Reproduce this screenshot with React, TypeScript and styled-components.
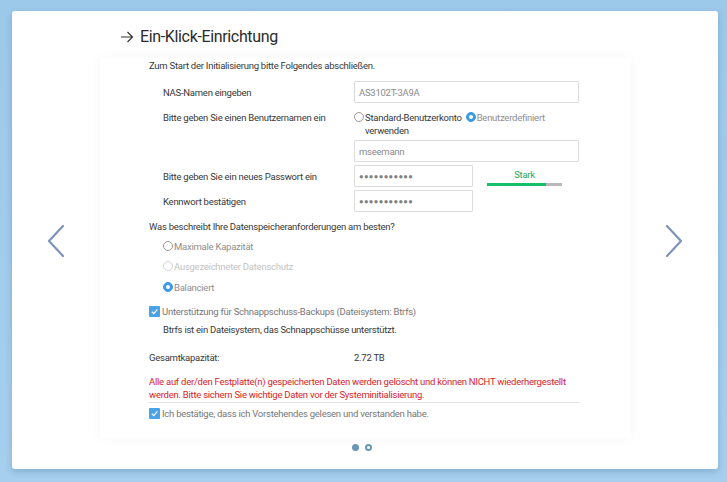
import * as React from 'react'
import styled, { createGlobalStyle } from 'styled-components'

const GlobalStyle = createGlobalStyle`
  html, body {
    margin: 0;
    padding: 0;
  }
  body {
    background: linear-gradient(180deg, #9cc8ea 0%, #a6cfee 100%);
    font-family: Roboto, "Noto Sans", Arial, sans-serif;
    color: #333;
  }
`

const Page = styled.div`
  width: 727px;
  height: 482px;
  box-sizing: border-box;
  padding: 11px 9px 13px 12px;
`

const Card = styled.div`
  height: 100%;
  background: #fff;
  border-radius: 3px;
  box-shadow: 0 3px 6px rgba(40, 80, 120, 0.25);
  display: grid;
  grid-template-columns: 88px 530px 1fr;
`

const NavSide = styled.div`
  display: flex;
  align-items: center;
  justify-content: center;
  padding-top: 2px;
  color: #7d93ba;
`

const Middle = styled.div`
  display: flex;
  flex-direction: column;
`

const Title = styled.h1`
  margin: 0;
  height: 47px;
  box-sizing: border-box;
  padding: 16px 0 0 20px;
  display: flex;
  align-items: flex-start;
  gap: 6px;
  font-size: 16px;
  font-weight: 400;
  line-height: 20px;
  align-self: flex-start;
  color: #2b2b2b;
`

const TitleArrow = styled.svg`
  margin-top: 4px;
`

const TitleText = styled.span`
  letter-spacing: -0.35px;
`

const Panel = styled.div`
  height: 380px;
  box-sizing: border-box;
  padding: 1px 51px 0 49px;
  font-size: 9.5px;
  letter-spacing: -0.25px;
  color: #383838;
  box-shadow: 0 0 10px rgba(60, 70, 140, 0.045);
  display: flex;
  flex-direction: column;
`

const Line = styled.div<{ $indent?: boolean; $color?: string; $mt?: number }>`
  line-height: 14px;
  padding-left: ${(p) => (p.$indent ? '14px' : '0')};
  margin-top: ${(p) => p.$mt ?? 0}px;
  color: ${(p) => p.$color ?? '#383838'};
`

const FormRow = styled.div<{ $mt?: number; $top?: boolean }>`
  display: grid;
  grid-template-columns: 191px 1fr;
  align-items: ${(p) => (p.$top ? 'start' : 'center')};
  padding-left: 14px;
  margin-top: ${(p) => p.$mt ?? 0}px;
`

const Label = styled.div`
  line-height: 13px;
`

const Input = styled.div<{ $short?: boolean }>`
  box-sizing: border-box;
  width: ${(p) => (p.$short ? '119px' : '225px')};
  height: 22px;
  border: 1px solid #dcdcdc;
  border-radius: 1px;
  padding-left: 4px;
  display: flex;
  align-items: center;
  color: #8a8a8a;
`

const Dots = styled.span`
  color: #808080;
  font-size: 7.5px;
  letter-spacing: 0.4px;
`

const Inline = styled.div`
  display: flex;
  align-items: center;
`

const Strength = styled.div`
  margin-left: 14px;
  width: 75px;
  display: flex;
  flex-direction: column;
  align-items: center;
  padding-top: 2px;
`

const StrengthText = styled.div`
  color: #22a865;
  line-height: 12px;
`

const Bar = styled.div`
  margin-top: 2px;
  width: 75px;
  height: 3px;
  background: #b9b9b9;
  display: flex;
`

const BarFill = styled.div`
  height: 100%;
  background: #14c068;
`

const RadioGroup = styled.div`
  display: flex;
  flex-wrap: wrap;
  line-height: 13px;
  width: 200px;
`

const RadioItem = styled.label<{ $muted?: 'light' | 'lighter'; $gap?: number }>`
  display: flex;
  align-items: flex-start;
  margin-left: ${(p) => p.$gap ?? 0}px;
  color: ${(p) => (p.$muted === 'lighter' ? '#c4c4c4' : p.$muted === 'light' ? '#8e8e8e' : '#383838')};
  line-height: 13px;
`

const RadioText = styled.span`
  margin-left: 1px;
`

const Circle = styled.span<{ $checked?: boolean; $faint?: boolean }>`
  flex: none;
  box-sizing: border-box;
  width: 10px;
  height: 10px;
  margin-top: 1px;
  border-radius: 50%;
  border: 1px solid ${(p) => (p.$checked ? '#3d9be6' : p.$faint ? '#d6d6d6' : '#9a9a9a')};
  background: ${(p) => (p.$checked ? '#3d9be6' : '#fff')};
  display: flex;
  align-items: center;
  justify-content: center;
  &::after {
    content: '';
    display: ${(p) => (p.$checked ? 'block' : 'none')};
    width: 4px;
    height: 4px;
    border-radius: 50%;
    background: #fff;
  }
`

const OptionList = styled.div`
  padding-left: 14px;
  margin-top: 2px;
  display: flex;
  flex-direction: column;
`

const Option = styled.div`
  height: 20.5px;
  display: flex;
  align-items: center;
`

const CheckRow = styled.div<{ $mt?: number; $color?: string }>`
  display: flex;
  align-items: center;
  gap: 2px;
  line-height: 14px;
  margin-top: ${(p) => p.$mt ?? 0}px;
  color: ${(p) => p.$color ?? '#666'};
`

const CheckBox = styled.span`
  flex: none;
  width: 11px;
  height: 11px;
  border-radius: 1px;
  background: #48a3e9;
  display: flex;
  align-items: center;
  justify-content: center;
`

const Capacity = styled.div`
  display: grid;
  grid-template-columns: 205px 1fr;
  line-height: 14px;
  margin-top: 14px;
`

const Warning = styled.div`
  margin-top: 10px;
  color: #d8232a;
  line-height: 13px;
`

const Divider = styled.div`
  margin-top: 1px;
  height: 1px;
  width: 430px;
  background: #e2e2e2;
`

const Pager = styled.div`
  display: flex;
  justify-content: center;
  gap: 6px;
  margin-top: 6px;
  padding-right: 6px;
`

const PagerDot = styled.span<{ $active?: boolean }>`
  box-sizing: border-box;
  width: 7px;
  height: 7px;
  border-radius: 50%;
  background: ${(p) => (p.$active ? '#6a96b8' : '#fff')};
  border: ${(p) => (p.$active ? 'none' : '2px solid #6a96b8')};
`

function Check(): JSX.Element {
  return (
    <CheckBox>
      <svg width="9" height="9" viewBox="0 0 10 10">
        <path d="M2 5.2 L4.2 7.3 L8.2 2.6" fill="none" stroke="#fff" strokeWidth="1.4" />
      </svg>
    </CheckBox>
  )
}

function Chevron({ dir }: { dir: 'left' | 'right' }): JSX.Element {
  const d = dir === 'left' ? 'M16 1 L2 16 L16 31' : 'M2 1 L16 16 L2 31'
  return (
    <svg width="18" height="32" viewBox="0 0 18 32">
      <path d={d} fill="none" stroke="currentColor" strokeWidth="2.2" strokeLinecap="round" strokeLinejoin="round" />
    </svg>
  )
}

export default function App(): JSX.Element {
  return (
    <Page>
      <GlobalStyle />
      <Card>
        <NavSide>
          <Chevron dir="left" />
        </NavSide>
        <Middle>
          <Title>
            <TitleArrow width="14" height="12" viewBox="0 0 14 12">
              <path d="M1 6 H12.5 M7.5 1 L12.5 6 L7.5 11" fill="none" stroke="#333" strokeWidth="1.2" />
            </TitleArrow>
            <TitleText>Ein-Klick-Einrichtung</TitleText>
          </Title>
          <Panel>
            <Line>Zum Start der Initialisierung bitte Folgendes abschließen.</Line>
            <FormRow $mt={8}>
              <Label>NAS-Namen eingeben</Label>
              <Input>AS3102T-3A9A</Input>
            </FormRow>
            <FormRow $mt={8} $top>
              <Label>Bitte geben Sie einen Benutzernamen ein</Label>
              <RadioGroup>
                <RadioItem>
                  <Circle />
                  <RadioText>
                    Standard-Benutzerkonto
                    <br />
                    verwenden
                  </RadioText>
                </RadioItem>
                <RadioItem $muted="light" $gap={4}>
                  <Circle $checked />
                  <RadioText>Benutzerdefiniert</RadioText>
                </RadioItem>
              </RadioGroup>
            </FormRow>
            <FormRow $mt={3}>
              <Label />
              <Input>mseemann</Input>
            </FormRow>
            <FormRow $mt={3}>
              <Label>Bitte geben Sie ein neues Passwort ein</Label>
              <Inline>
                <Input $short>
                  <Dots>●●●●●●●●●●●</Dots>
                </Input>
                <Strength>
                  <StrengthText>Stark</StrengthText>
                  <Bar>
                    <BarFill style={{ width: '79%' }} />
                  </Bar>
                </Strength>
              </Inline>
            </FormRow>
            <FormRow $mt={3}>
              <Label>Kennwort bestätigen</Label>
              <Input $short>
                <Dots>●●●●●●●●●●●</Dots>
              </Input>
            </FormRow>
            <Line $mt={8}>Was beschreibt Ihre Datenspeicheranforderungen am besten?</Line>
            <OptionList>
              <Option>
                <RadioItem $muted="light">
                  <Circle />
                  <RadioText>Maximale Kapazität</RadioText>
                </RadioItem>
              </Option>
              <Option>
                <RadioItem $muted="lighter">
                  <Circle $faint />
                  <RadioText>Ausgezeichneter Datenschutz</RadioText>
                </RadioItem>
              </Option>
              <Option>
                <RadioItem $muted="light">
                  <Circle $checked />
                  <RadioText>Balanciert</RadioText>
                </RadioItem>
              </Option>
            </OptionList>
            <CheckRow $mt={7} $color="#777">
              <Check />
              <span>Unterstützung für Schnappschuss-Backups (Dateisystem: Btrfs)</span>
            </CheckRow>
            <Line $indent $mt={4}>
              Btrfs ist ein Dateisystem, das Schnappschüsse unterstützt.
            </Line>
            <Capacity>
              <span>Gesamtkapazität:</span>
              <span>2.72 TB</span>
            </Capacity>
            <Warning>
              Alle auf der/den Festplatte(n) gespeicherten Daten werden gelöscht und können NICHT wiederhergestellt
              werden. Bitte sichern Sie wichtige Daten vor der Systeminitialisierung.
            </Warning>
            <Divider />
            <CheckRow $mt={4} $color="#777">
              <Check />
              <span>Ich bestätige, dass ich Vorstehendes gelesen und verstanden habe.</span>
            </CheckRow>
          </Panel>
          <Pager>
            <PagerDot $active />
            <PagerDot />
          </Pager>
        </Middle>
        <NavSide>
          <Chevron dir="right" />
        </NavSide>
      </Card>
    </Page>
  )
}
